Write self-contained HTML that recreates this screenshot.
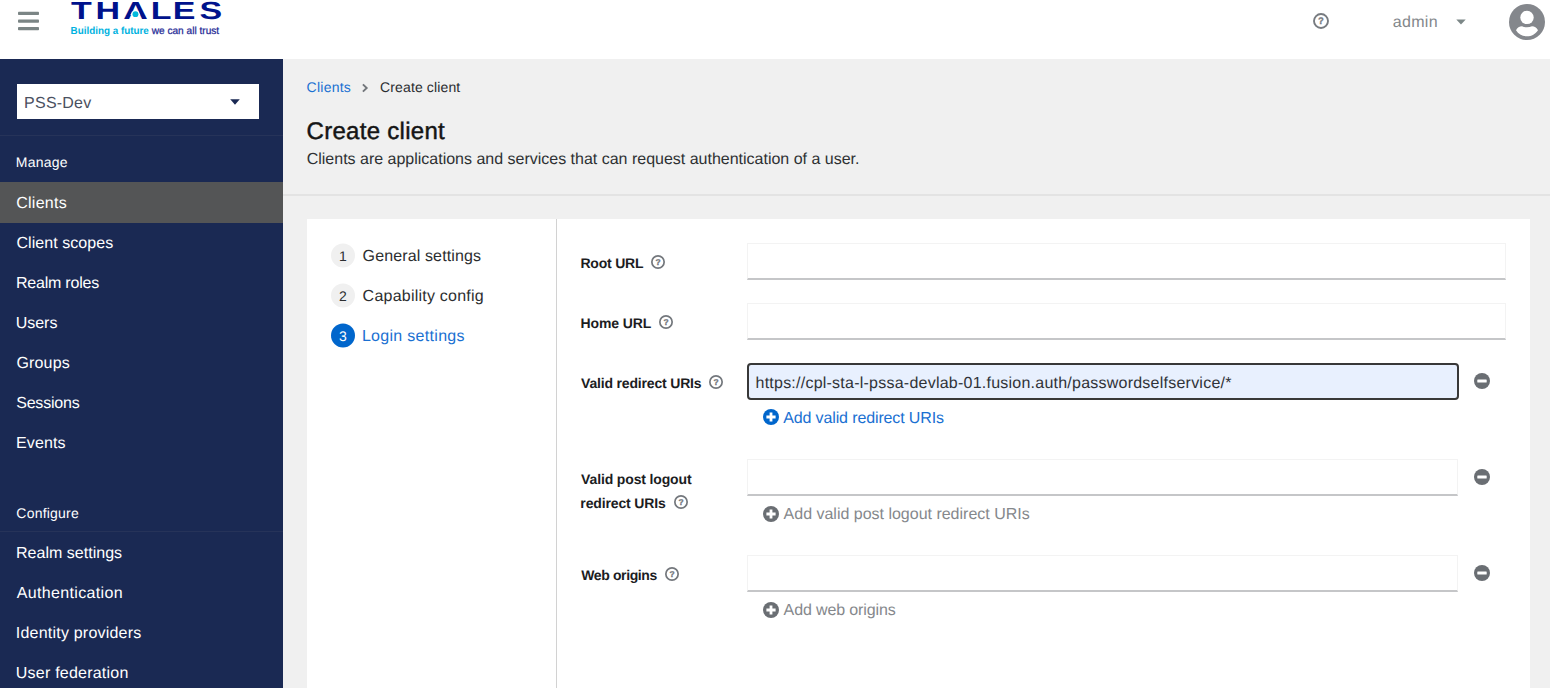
<!DOCTYPE html>
<html lang="en">
<head>
<meta charset="utf-8">
<title>Create client</title>
<style>
*{box-sizing:border-box;margin:0;padding:0}
html,body{width:1550px;height:688px;overflow:hidden;background:#f0f0f0}
body{text-rendering:geometricPrecision;font-family:"Liberation Sans",sans-serif;color:#151515;position:relative;-webkit-font-smoothing:antialiased}
.abs{position:absolute}
.t{position:absolute;white-space:nowrap;line-height:1;transform-origin:0 0}
#header{left:0;top:0;width:1550px;height:59px;background:#fff}
#sidebar{left:0;top:59px;width:283px;height:629px;background:#1a2953}
#sidebar .nav{position:absolute;left:17px;color:#fff;font-size:16px;white-space:nowrap;line-height:1;transform-origin:0 0}
#sidebar .sec{position:absolute;left:17px;color:#fff;font-size:14px;white-space:nowrap;line-height:1;transform-origin:0 0}
.hr{position:absolute;left:0;width:283px;height:1px;background:#263359}
#sel{left:17px;top:24.5px;width:242px;height:35.5px;background:#fff}
#card{left:307px;top:219px;width:1223px;height:469px;background:#fff}
#wiznav{left:0;top:0;width:250px;height:469px;border-right:1px solid #d2d2d2}
.num{position:absolute;transform:translateY(0.5px);left:24px;width:24px;height:24px;border-radius:50%;background:#f0f0f0;font-size:14px;text-align:center;line-height:24px;color:#2c2e30}
.num.on{background:#0066cc;color:#fff}
.step{position:absolute;left:56px;font-size:16px;line-height:1;white-space:nowrap;transform-origin:0 0}
.lbl{position:absolute;left:581px;font-size:14px;font-weight:bold;color:#1c1d1f;line-height:1;white-space:nowrap;transform-origin:0 0}
.inp{position:absolute;left:747px;height:37px;background:#fff;border:1px solid #f3f3f3;border-bottom:2px solid #c5c6c8}
.add{position:absolute;left:783.5px;font-size:16px;line-height:1;white-space:nowrap;transform-origin:0 0}
svg{position:absolute;overflow:visible}
/*TUNE*/
#admin{letter-spacing:0.300px;margin-left:-0.70px}
#realm{letter-spacing:0.216px;margin-left:-0.90px}
#s_manage{letter-spacing:0.240px;margin-left:-1.20px}
#n1{letter-spacing:0.267px;margin-left:-0.80px}
#n2{letter-spacing:0.057px;margin-left:-0.50px}
#n3{letter-spacing:-0.220px;margin-left:-1.00px}
#n4{letter-spacing:-0.050px;margin-left:-1.20px}
#n5{letter-spacing:0.140px;margin-left:-0.50px}
#n6{letter-spacing:-0.200px;margin-left:-0.80px}
#n7{letter-spacing:0.120px;margin-left:-1.00px}
#s_conf{letter-spacing:0.210px;margin-left:-0.70px}
#n8{letter-spacing:0.023px;margin-left:-1.00px}
#n9{letter-spacing:0.339px;margin-left:-0.20px}
#n10{letter-spacing:0.211px;margin-left:-1.20px}
#n11{letter-spacing:0.222px;margin-left:-1.20px}
#bc1{letter-spacing:0.234px;margin-left:-0.80px}
#bc2{letter-spacing:0.134px;margin-left:-0.60px}
#title{letter-spacing:0.284px;margin-left:-0.80px}
#desc{letter-spacing:-0.006px;margin-left:-0.70px}
#st1{letter-spacing:0.126px;margin-left:-0.40px}
#st2{letter-spacing:0.231px;margin-left:-0.40px}
#st3{letter-spacing:0.300px;margin-left:-1.10px}
#l1{letter-spacing:-0.199px;margin-left:-0.60px}
#l2{letter-spacing:-0.085px;margin-left:-0.60px}
#l3{letter-spacing:-0.179px;margin-left:0.10px}
#l4{letter-spacing:-0.143px;margin-left:0.10px}
#l5{letter-spacing:-0.133px;margin-left:-0.70px}
#l6{letter-spacing:-0.390px;margin-left:0.30px}
#url{letter-spacing:0.235px;margin-left:-1.50px}
#a1{letter-spacing:-0.126px;margin-left:-0.30px}
#a2{letter-spacing:-0.008px;margin-left:0.10px}
#a3{letter-spacing:-0.121px;margin-left:0.10px}
/*ENDTUNE*/
</style>
</head>
<body>
<div id="header" class="abs">
<svg style="left:18px;top:12px" width="21" height="19" viewBox="0 0 21 19"><g fill="#7b8585"><rect x="0" y="-0.2" width="21" height="3.3" rx="0.8"/><rect x="0" y="7.4" width="21" height="3.3" rx="0.8"/><rect x="0" y="14.9" width="21" height="3.3" rx="0.8"/></g></svg>
<svg id="logo" style="left:0;top:0" width="260" height="59" viewBox="0 0 260 59">
<text id="thales" transform="translate(0 19.1) scale(1.376 1)" x="51.54 69.43 89.50 109.54 125.53 145.00" y="0" font-family="Liberation Sans, sans-serif" font-weight="bold" font-size="24.7" fill="#00128c">THALES</text>
<path d="M130.45 15.1 L132 11.4 H138.85 L140.4 15.1 Z" fill="#fff"/>
<circle cx="135.45" cy="14.15" r="2.95" fill="#00b9dc"/>
<text id="tag" y="33.8" font-family="Liberation Sans, sans-serif" font-size="10.3"><tspan x="70.6" fill="#00b2e0" font-weight="bold" textLength="78.2" lengthAdjust="spacingAndGlyphs">Building a future</tspan><tspan fill="#1f2a96"> </tspan><tspan x="151.7" fill="#1f2a96" stroke="#1f2a96" stroke-width="0.25" textLength="67.5" lengthAdjust="spacingAndGlyphs">we can all trust</tspan></text>
</svg>
<svg style="left:1313px;top:13px" width="16" height="16" viewBox="0 0 16 16"><circle cx="8" cy="8" r="7" fill="none" stroke="#777b80" stroke-width="1.9"/><text x="8" y="11.4" text-anchor="middle" font-family="Liberation Sans, sans-serif" font-weight="bold" font-size="9.5" fill="#777b80" stroke="#777b80" stroke-width="0.3">?</text></svg>
<div class="t" id="admin" style="left:1393.5px;top:14.5px;font-size:16px;color:#83878b">admin</div>
<svg style="left:1456px;top:19px" width="10" height="6" viewBox="0 0 10 6"><path d="M0.3 0.4 H9.7 L5 5.6 Z" fill="#7c8787"/></svg>
<svg style="left:1509px;top:3.5px" width="36" height="36" viewBox="0 0 36 36"><defs><clipPath id="avc"><circle cx="18" cy="18" r="18"/></clipPath></defs><circle cx="18" cy="18" r="18" fill="#84878c"/><g clip-path="url(#avc)" fill="#fff"><circle cx="18" cy="13.4" r="6.7"/><path d="M7 26.2 C8.2 23.4 10.5 22.2 13 22.2 C14.5 22.9 16.2 23.3 18 23.3 C19.8 23.3 21.5 22.9 23 22.2 C25.5 22.2 27.8 23.4 29 26.2 C26.6 30 22.6 32.3 18 32.3 C13.4 32.3 9.4 30 7 26.2 Z"/></g></svg>
</div>
<div id="sidebar" class="abs">
<div id="sel" class="abs"><div class="t" id="realm" style="left:8px;top:12px;font-size:16px;color:#4a5060">PSS-Dev</div>
<svg style="left:213px;top:15px" width="10" height="6" viewBox="0 0 10 6"><path d="M0.2 0.3 H9.8 L5 5.7 Z" fill="#1a2953"/></svg></div>
<div class="hr" style="top:76px"></div>
<div class="sec" id="s_manage" style="top:96px">Manage</div>
<div class="abs" style="left:0;top:123px;width:283px;height:41px;background:#545556"></div>
<div class="nav" id="n1" style="top:137px">Clients</div>
<div class="nav" id="n2" style="top:177px">Client scopes</div>
<div class="nav" id="n3" style="top:217px">Realm roles</div>
<div class="nav" id="n4" style="top:257px">Users</div>
<div class="nav" id="n5" style="top:297px">Groups</div>
<div class="nav" id="n6" style="top:337px">Sessions</div>
<div class="nav" id="n7" style="top:377px">Events</div>
<div class="sec" id="s_conf" style="top:447px">Configure</div>
<div class="hr" style="top:472px"></div>
<div class="nav" id="n8" style="top:487px">Realm settings</div>
<div class="nav" id="n9" style="top:527px">Authentication</div>
<div class="nav" id="n10" style="top:567px">Identity providers</div>
<div class="nav" id="n11" style="top:607px">User federation</div>
</div>
<div id="main">
<div class="t" id="bc1" style="left:307.4px;top:79.5px;font-size:14px;color:#1a70d2">Clients</div>
<svg style="left:361.7px;top:83.9px" width="6" height="8" viewBox="0 0 6 8"><path d="M0.9 0.4 L4.7 4 L0.9 7.6" fill="none" stroke="#72767b" stroke-width="1.9"/></svg>
<div class="t" id="bc2" style="left:380.6px;top:79.5px;font-size:14px;color:#2a2c2f">Create client</div>
<div class="t" id="title" style="left:307.4px;top:120px;font-size:24px;color:#151515;-webkit-text-stroke:0.45px #151515">Create client</div>
<div class="t" id="desc" style="left:307.4px;top:152px;font-size:16px;color:#2e3033">Clients are applications and services that can request authentication of a user.</div>
<div class="abs" style="left:283px;top:194px;width:1267px;height:2px;background:#e3e3e3"></div>
</div>
<div id="card" class="abs"><div id="wiznav" class="abs">
<div class="num" style="top:24px">1</div><div class="step" id="st1" style="top:30px;color:#2c2e30">General settings</div>
<div class="num" style="top:64px">2</div><div class="step" id="st2" style="top:70px;color:#2c2e30">Capability config</div>
<div class="num on" style="top:104px">3</div><div class="step" id="st3" style="top:110px;color:#1a70d2">Login settings</div>
</div></div>
<div id="form">
<div class="lbl" id="l1" style="top:255.5px">Root URL</div>
<div class="lbl" id="l2" style="top:315.5px">Home URL</div>
<div class="lbl" id="l3" style="top:375.5px">Valid redirect URIs</div>
<div class="lbl" id="l4" style="top:471.5px">Valid post logout</div>
<div class="lbl" id="l5" style="top:495.5px">redirect URIs</div>
<div class="lbl" id="l6" style="top:567.5px">Web origins</div>
<div class="inp" style="top:243px;width:759px"></div>
<div class="inp" style="top:303px;width:759px"></div>
<div class="inp" id="redir" style="top:363px;width:711.5px;height:36.5px;background:#e8f0fe;border:2px solid #383838;border-radius:4px"><div class="t" id="url" style="left:8px;top:10.5px;font-size:16px;color:#303338">https://cpl-sta-l-pssa-devlab-01.fusion.auth/passwordselfservice/*</div></div>
<div class="inp" style="top:459px;width:711px"></div>
<div class="inp" style="top:555px;width:711px"></div>
<svg style="left:651.2px;top:255.2px" width="14" height="14" viewBox="0 0 14 14"><circle cx="7" cy="7" r="6.15" fill="none" stroke="#73777c" stroke-width="1.7"/><text x="7" y="10" text-anchor="middle" font-family="Liberation Sans, sans-serif" font-weight="bold" font-size="8.4" fill="#73777c" stroke="#73777c" stroke-width="0.35">?</text></svg>
<svg style="left:659.4px;top:315.2px" width="14" height="14" viewBox="0 0 14 14"><circle cx="7" cy="7" r="6.15" fill="none" stroke="#73777c" stroke-width="1.7"/><text x="7" y="10" text-anchor="middle" font-family="Liberation Sans, sans-serif" font-weight="bold" font-size="8.4" fill="#73777c" stroke="#73777c" stroke-width="0.35">?</text></svg>
<svg style="left:708.9px;top:375.2px" width="14" height="14" viewBox="0 0 14 14"><circle cx="7" cy="7" r="6.15" fill="none" stroke="#73777c" stroke-width="1.7"/><text x="7" y="10" text-anchor="middle" font-family="Liberation Sans, sans-serif" font-weight="bold" font-size="8.4" fill="#73777c" stroke="#73777c" stroke-width="0.35">?</text></svg>
<svg style="left:673.8px;top:495.4px" width="14" height="14" viewBox="0 0 14 14"><circle cx="7" cy="7" r="6.15" fill="none" stroke="#73777c" stroke-width="1.7"/><text x="7" y="10" text-anchor="middle" font-family="Liberation Sans, sans-serif" font-weight="bold" font-size="8.4" fill="#73777c" stroke="#73777c" stroke-width="0.35">?</text></svg>
<svg style="left:665.2px;top:567.2px" width="14" height="14" viewBox="0 0 14 14"><circle cx="7" cy="7" r="6.15" fill="none" stroke="#73777c" stroke-width="1.7"/><text x="7" y="10" text-anchor="middle" font-family="Liberation Sans, sans-serif" font-weight="bold" font-size="8.4" fill="#73777c" stroke="#73777c" stroke-width="0.35">?</text></svg>
<svg style="left:763.2px;top:409.0px" width="16" height="16" viewBox="0 0 16 16"><circle cx="8" cy="8" r="8" fill="#0066cc"/><path d="M3.4 6.6 H6.6 V3.6 H9.4 V6.6 H12.6 V9.4 H9.4 V12.6 H6.6 V9.4 H3.4 Z" fill="#fff"/></svg>
<svg style="left:763.2px;top:505.5px" width="16" height="16" viewBox="0 0 16 16"><circle cx="8" cy="8" r="8" fill="#6a6e73"/><path d="M3.4 6.6 H6.6 V3.6 H9.4 V6.6 H12.6 V9.4 H9.4 V12.6 H6.6 V9.4 H3.4 Z" fill="#fff"/></svg>
<svg style="left:763.2px;top:601.5px" width="16" height="16" viewBox="0 0 16 16"><circle cx="8" cy="8" r="8" fill="#6a6e73"/><path d="M3.4 6.6 H6.6 V3.6 H9.4 V6.6 H12.6 V9.4 H9.4 V12.6 H6.6 V9.4 H3.4 Z" fill="#fff"/></svg>
<svg style="left:1473.9px;top:373.05px" width="16" height="16" viewBox="0 0 16 16"><circle cx="8" cy="8" r="8" fill="#6a6e73"/><rect x="3.3" y="6.6" width="9.4" height="2.8" rx="0.5" fill="#fff"/></svg>
<svg style="left:1473.9px;top:469.05px" width="16" height="16" viewBox="0 0 16 16"><circle cx="8" cy="8" r="8" fill="#6a6e73"/><rect x="3.3" y="6.6" width="9.4" height="2.8" rx="0.5" fill="#fff"/></svg>
<svg style="left:1473.9px;top:565.05px" width="16" height="16" viewBox="0 0 16 16"><circle cx="8" cy="8" r="8" fill="#6a6e73"/><rect x="3.3" y="6.6" width="9.4" height="2.8" rx="0.5" fill="#fff"/></svg>
<div class="add" id="a1" style="top:410.9px;color:#1a70d2">Add valid redirect URIs</div>
<div class="add" id="a2" style="top:506.9px;color:#85888c">Add valid post logout redirect URIs</div>
<div class="add" id="a3" style="top:602.9px;color:#85888c">Add web origins</div>
</div>
</body>
</html>
